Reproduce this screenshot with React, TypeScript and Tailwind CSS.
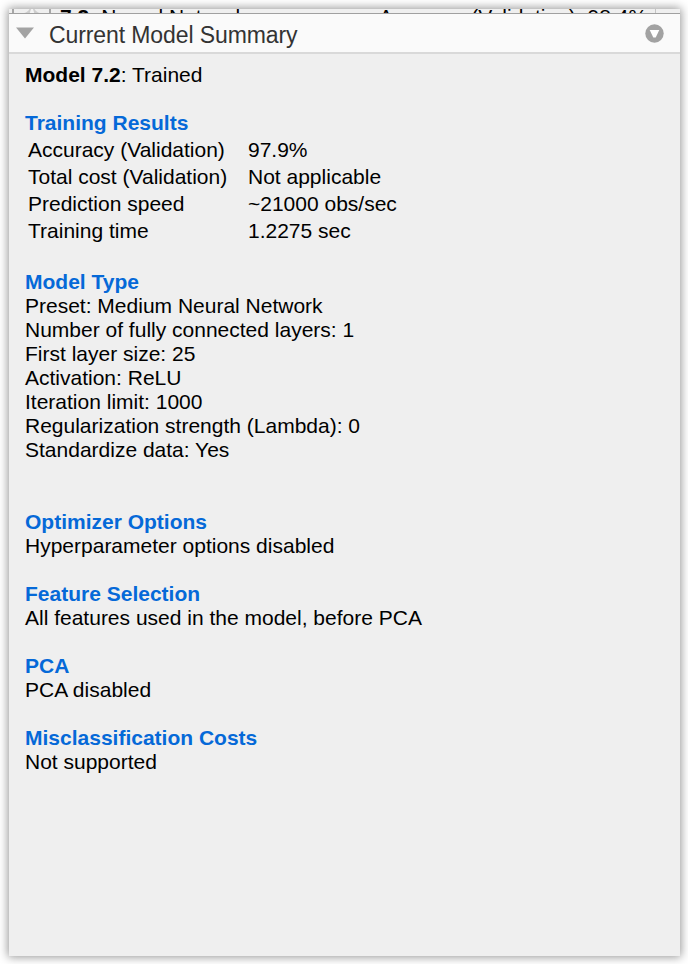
const results = [
  ['Accuracy (Validation)', '97.9%'],
  ['Total cost (Validation)', 'Not applicable'],
  ['Prediction speed', '~21000 obs/sec'],
  ['Training time', '1.2275 sec'],
];

const sections = [
  {
    title: 'Model Type',
    className: 'mt-[26px]',
    lines: [
      'Preset: Medium Neural Network',
      'Number of fully connected layers: 1',
      'First layer size: 25',
      'Activation: ReLU',
      'Iteration limit: 1000',
      'Regularization strength (Lambda): 0',
      'Standardize data: Yes',
    ],
  },
  { title: 'Optimizer Options', className: 'mt-12', lines: ['Hyperparameter options disabled'] },
  { title: 'Feature Selection', className: 'mt-6', lines: ['All features used in the model, before PCA'] },
  { title: 'PCA', className: 'mt-6', lines: ['PCA disabled'] },
  { title: 'Misclassification Costs', className: 'mt-6', lines: ['Not supported'] },
];

function ClippedRow() {
  return (
    <div className="flex h-1 shrink-0 items-start overflow-hidden bg-[#efefef] text-[21px] leading-[24px]">
      <div className="ml-[3px] h-6 w-[39px] shrink-0 border-x-2 border-[#a6a6a6]">
        <svg width="35" height="20" viewBox="0 0 35 20">
          <path d="M8 4.500C11 4 14 3 15.500 0h5C22 3 25 4 28 4.500Z" fill="#cdcdcd" />
          <path d="M15.500 5 17 0h2l1.500 5Z" fill="#f4f4f4" />
        </svg>
      </div>
      <div className="-mt-1 ml-[9px] flex w-[318px] shrink-0 gap-[12px] whitespace-nowrap">
        <b>7.3</b>
        <span>Neural Network</span>
      </div>
      <div className="-mt-1 h-8 w-[278px] shrink-0 whitespace-nowrap border-r border-[#c4c4c4] pl-px">
        Accuracy (Validation): 98.4%
      </div>
    </div>
  );
}

function Heading({ children }: { children: string }) {
  return <h2 className="font-bold text-[#0569d8]">{children}</h2>;
}

export default function App() {
  return (
    <div className="h-[964px] w-[688px] overflow-hidden bg-white pl-[9px] pt-[9px] font-['Liberation_Sans',Arial,sans-serif]">
      <main className="flex h-[947px] w-[671px] flex-col bg-[#efefef] shadow-[0_0_9px_1px_rgba(0,0,0,0.42)]">
        <ClippedRow />
        <header className="flex h-[41px] shrink-0 items-center border-b-2 border-t border-b-[#d9d9d9] border-t-[#a0a0a0] bg-[#fafafa] pl-[7px] pr-4">
          <svg width="18" height="12" viewBox="0 0 18 12">
            <path d="M0 .5h18L9 11.5Z" fill="#a3a3a3" />
          </svg>
          <h1 className="ml-[15px] pt-[3px] text-[23px] leading-[28px] tracking-[-0.1px] text-[#333]">Current Model Summary</h1>
          <svg className="ml-auto" width="19" height="19" viewBox="0 0 19 19">
            <circle cx="9.5" cy="9.5" r="9.2" fill="#a2a2a2" />
            <path d="M4.7 6h9.6L10.7 13.5H8.3Z" fill="#fff" />
          </svg>
        </header>
        <div className="px-4 pt-[9px] text-[21px] leading-[24px] text-black">
          <p><b>Model 7.2</b>: Trained</p>
          <section className="mt-6">
            <Heading>Training Results</Heading>
            <dl className="ml-[3px] mt-px grid grid-cols-[220px_1fr] leading-[27px]">
              {results.map(([name, value]) => (
                <div key={name} className="contents">
                  <dt>{name}</dt>
                  <dd>{value}</dd>
                </div>
              ))}
            </dl>
          </section>
          {sections.map((section) => (
            <section key={section.title} className={section.className}>
              <Heading>{section.title}</Heading>
              {section.lines.map((line) => <p key={line}>{line}</p>)}
            </section>
          ))}
        </div>
      </main>
    </div>
  );
}
